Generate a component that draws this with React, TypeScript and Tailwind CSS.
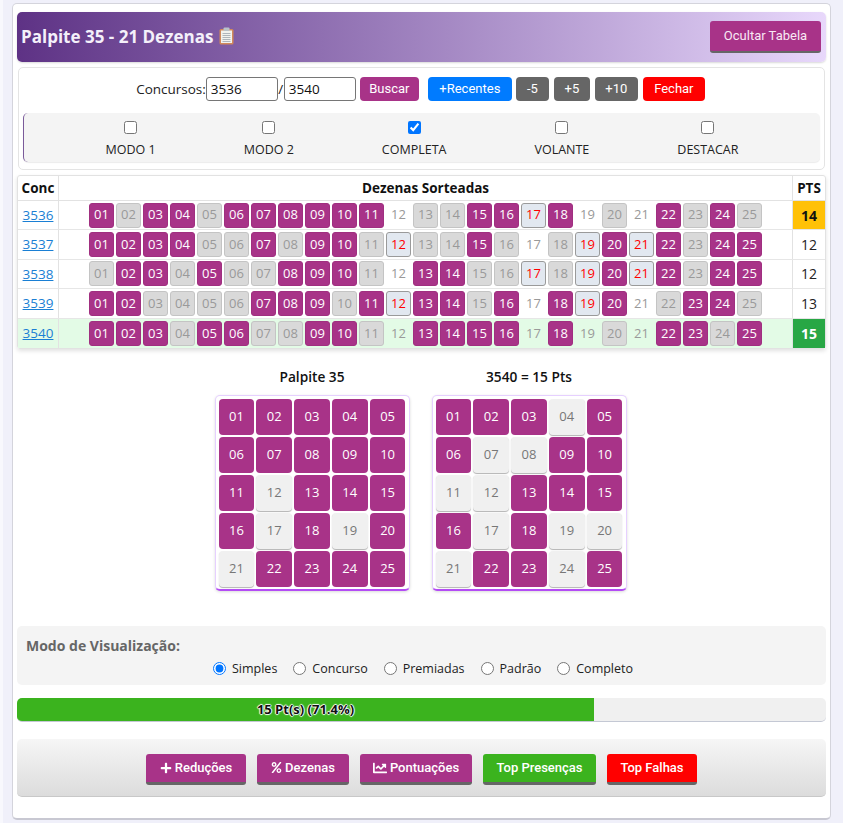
import { FaPlus, FaPercent, FaChartLine } from "react-icons/fa";

const sans = "font-['Open_Sans','Noto_Sans',sans-serif]";
const roboto = "font-['Roboto',sans-serif]";

const rows = [
  {
    conc: "3536",
    hit: [1, 3, 4, 6, 7, 8, 9, 10, 11, 15, 16, 18, 22, 24],
    red: [17],
    blank: [12, 19, 21],
    pts: 14,
  },
  {
    conc: "3537",
    hit: [1, 2, 3, 4, 7, 9, 10, 15, 20, 22, 24, 25],
    red: [12, 19, 21],
    blank: [17],
    pts: 12,
  },
  {
    conc: "3538",
    hit: [2, 3, 5, 8, 9, 10, 13, 14, 20, 22, 24, 25],
    red: [17, 19, 21],
    blank: [12],
    pts: 12,
  },
  {
    conc: "3539",
    hit: [1, 2, 7, 8, 9, 11, 13, 14, 16, 18, 20, 23, 24],
    red: [12, 19],
    blank: [17, 21],
    pts: 13,
  },
  {
    conc: "3540",
    hit: [1, 2, 3, 5, 6, 9, 10, 13, 14, 15, 16, 18, 22, 23, 25],
    red: [],
    blank: [12, 17, 19, 21],
    pts: 15,
  },
];

const numbers = Array.from({ length: 25 }, (_, i) => i + 1);
const pad = (n: number) => String(n).padStart(2, "0");

const palpite = numbers.filter((n) => ![12, 17, 19, 21].includes(n));
const sorteio = rows[4].hit;

function Ball({ n, row, last }: { n: number; row: (typeof rows)[number]; last: boolean }) {
  let cls = "bg-[#d9d9d9] text-[#999] border border-[#c4c4c4]";
  if (row.hit.includes(n)) cls = "bg-[#a83388] text-white border border-[#a02f80] font-medium";
  else if (row.red.includes(n)) cls = "bg-[#e2e8f0] text-[#ff0000] border border-[#9a9a9a]";
  else if (row.blank.includes(n)) cls = last ? "text-[#9a9a9a] bg-[#e3fbe6]" : "bg-white text-[#999]";
  return (
    <div className={`w-[25px] h-[25px] mx-px rounded-[3px] flex items-center justify-center text-[13px] ${cls}`}>
      {pad(n)}
    </div>
  );
}

function Board({ title, on }: { title: string; on: number[] }) {
  return (
    <div className="w-[195px]">
      <div className="text-center text-[13.7px] font-semibold text-[#111] h-[28px] leading-[20px]">{title}</div>
      <div className="bg-white rounded-[5px] border border-[#e6d0ff] border-b-2 border-b-[#b44cf5] px-[3px] pt-[3px] pb-[2px] grid grid-cols-5 gap-[2px] shadow-[0_1px_3px_rgba(0,0,0,0.15)]">
        {numbers.map((n) => (
          <div
            key={n}
            className={`h-[36px] rounded-[4px] flex items-center justify-center text-[13px] ${
              on.includes(n)
                ? "bg-[#a83388] text-white"
                : "bg-[#f0f0f0] text-[#777] shadow-[0_1px_1px_rgba(0,0,0,0.3)]"
            }`}
          >
            {pad(n)}
          </div>
        ))}
      </div>
    </div>
  );
}

function ClipboardIcon() {
  return (
    <svg width="15" height="18" viewBox="0 0 15 18" className="inline-block ml-[6px] -mt-[2px]">
      <rect x="0.5" y="2" width="14" height="15.5" rx="1.5" fill="#d2895a" />
      <rect x="2" y="3.5" width="11" height="12.5" fill="#f2f2ee" />
      <rect x="4.5" y="0.5" width="6" height="3.5" rx="1" fill="#b9c2c9" />
      <path d="M3.5 6.5h8M3.5 8.5h8M3.5 10.5h8M3.5 12.5h8M3.5 14.5h8" stroke="#a8aeb4" strokeWidth="0.9" />
    </svg>
  );
}

const smallBtn = `${roboto} h-[24px] rounded-[4px] text-white text-[13px] flex items-center justify-center`;
const bottomBtn = `${roboto} h-[31px] rounded-[3px] border-b-[3px] border-b-[#666] text-white text-[13px] font-medium flex items-center justify-center gap-[3px]`;

export default function App() {
  return (
    <div className={`${sans} min-h-[823px] bg-[#f0f0fa] border-l-[3px] border-l-[#f8f8fd] pt-[3px] pl-[9px] pr-[12px] pb-[3px]`}>
      <div className="h-[817px] bg-white border border-[#d4d4dc] border-b-2 border-b-[#c8c8d2] rounded-[5px] px-[4px] pt-[8px]">
        {/* Header */}
        <div className="h-[50px] rounded-[5px] bg-gradient-to-r from-[#5e3285] to-[#e8d8fb] flex items-center justify-between pl-[4px] pr-[5px] shadow-[0_1px_2px_rgba(0,0,0,0.15)]">
          <h1 className="text-[17px] font-bold text-[#f4f0fa] flex items-center">
            Palpite 35 - 21 Dezenas
            <ClipboardIcon />
          </h1>
          <button className={`${roboto} w-[111px] h-[32px] rounded-[3px] bg-[#a83388] border-b-[2px] border-b-[#666] text-[#f8e8f4] text-[13px]`}>
            Ocultar Tabela
          </button>
        </div>

        {/* Filtros */}
        <div className="mt-[5px] mx-px h-[103px] rounded-[5px] border border-[#e4e4e4] px-[4px] pt-[9px]">
          <div className="h-[24px] pr-[2px] flex items-center justify-center text-[13.5px] text-[#222]">
            <span>Concursos:</span>
            <input
              readOnly
              value="3536"
              className="w-[72px] h-[24px] px-[4px] border border-[#767676] rounded-[3px] text-[#111] text-[13.5px]"
            />
            <span className="w-[6px] text-center">/</span>
            <input
              readOnly
              value="3540"
              className="w-[72px] h-[24px] px-[4px] border border-[#767676] rounded-[3px] text-[#111] text-[13.5px]"
            />
            <button className={`${smallBtn} w-[59px] ml-[4px] bg-[#a83388]`}>Buscar</button>
            <button className={`${smallBtn} w-[84px] ml-[9px] bg-[#007bff]`}>+Recentes</button>
            <button className={`${smallBtn} w-[33px] ml-[4px] bg-[#666]`}>-5</button>
            <button className={`${smallBtn} w-[36px] ml-[5px] bg-[#666]`}>+5</button>
            <button className={`${smallBtn} w-[43px] ml-[5px] bg-[#666]`}>+10</button>
            <button className={`${smallBtn} w-[62px] ml-[5px] bg-[#ff0000]`}>Fechar</button>
          </div>
          <div className="mt-[12px] h-[49px] bg-[#f4f4f4] rounded-[5px] border-l border-l-[#7a5a9a] shadow-[0_1px_1px_rgba(0,0,0,0.08)] flex justify-center gap-[88px] text-[12.5px] text-[#222]">
            {["MODO 1", "MODO 2", "COMPLETA", "VOLANTE", "DESTACAR"].map((label) => (
              <label key={label} className="flex flex-col items-center pt-[8px]">
                <input type="checkbox" readOnly checked={label === "COMPLETA"} className="m-0 w-[13px] h-[13px]" />
                <span className="mt-[8px] leading-[16px]">{label}</span>
              </label>
            ))}
          </div>
        </div>

        {/* Tabela */}
        <div className="mt-[5px] border border-[#e2e2e2] rounded-[3px] shadow-[0_2px_4px_rgba(0,0,0,0.12)]">
          <div className="flex h-[25px] text-[13.5px] font-bold text-[#111] border-b border-[#e2e2e2]">
            <div className="w-[41px] flex items-center justify-center border-r border-[#e2e2e2]">Conc</div>
            <div className="flex-1 flex items-center justify-center border-r border-[#e2e2e2]">Dezenas Sorteadas</div>
            <div className="w-[32px] flex items-center justify-center">PTS</div>
          </div>
          {rows.map((row, i) => {
            const last = i === rows.length - 1;
            return (
              <div
                key={row.conc}
                className={`flex h-[29.4px] ${last ? "bg-[#e3fbe6]" : "border-b border-[#e6e6e6]"}`}
              >
                <div className="w-[41px] flex items-center justify-center border-r border-[#e2e2e2] text-[13.5px] text-[#1a7fd4] underline">
                  {row.conc}
                </div>
                <div className="flex-1 flex items-center justify-center border-r border-[#e2e2e2]">
                  {numbers.map((n) => (
                    <Ball key={n} n={n} row={row} last={last} />
                  ))}
                </div>
                <div
                  className={`w-[32px] flex items-center justify-center text-[14px] ${
                    row.pts === 14
                      ? "bg-[#ffc107] font-bold text-[#111]"
                      : row.pts === 15
                        ? "bg-[#28a745] font-bold text-white"
                        : "text-[#222]"
                  }`}
                >
                  {row.pts}
                </div>
              </div>
            );
          })}
        </div>

        {/* Volantes */}
        <div className="mt-[18px] pr-[2px] flex justify-center gap-[22px]">
          <Board title="Palpite 35" on={palpite} />
          <Board title="3540 = 15 Pts" on={sorteio} />
        </div>

        {/* Modo */}
        <div className="mt-[35px] h-[59px] bg-[#f4f4f4] rounded-[5px] px-[9px] pt-[10px]">
          <div className="text-[14px] font-bold text-[#666] leading-[20px]">Modo de Visualização:</div>
          <div className="mt-[3px] pl-[3px] flex justify-center gap-[16px] text-[12.5px] text-[#222]">
            {["Simples", "Concurso", "Premiadas", "Padrão", "Completo"].map((label) => (
              <label key={label} className="flex items-center gap-[6px] h-[20px]">
                <input type="radio" readOnly checked={label === "Simples"} className="m-0 w-[13px] h-[13px]" />
                {label}
              </label>
            ))}
          </div>
        </div>

        {/* Progresso */}
        <div className="mt-[13px] h-[24px] bg-[#f0f0f0] rounded-[5px] border-b border-b-[#c4c8d4] overflow-hidden">
          <div className="h-[23px] w-[577px] bg-[#3bb31e] flex items-center justify-center text-[13px] font-bold text-[#111] [text-shadow:1px_0_1px_#fff,-1px_0_1px_#fff,0_1px_1px_#fff,0_-1px_1px_#fff]">
            15 Pt(s) (71.4%)
          </div>
        </div>

        {/* Acoes */}
        <div className="mt-[17px] h-[58px] rounded-[5px] bg-gradient-to-b from-[#f6f6f6] to-[#dcdcdc] border-b border-b-[#c8c8c8] flex justify-center items-start gap-[11px] pt-[15px]">
          <button className={`${bottomBtn} w-[100px] bg-[#a83388]`}>
            <FaPlus className="text-[12px]" /> Reduções
          </button>
          <button className={`${bottomBtn} w-[92px] bg-[#a83388]`}>
            <FaPercent className="text-[11px]" /> Dezenas
          </button>
          <button className={`${bottomBtn} w-[112px] bg-[#a83388]`}>
            <FaChartLine className="text-[14px]" /> Pontuações
          </button>
          <button className={`${bottomBtn} w-[113px] bg-[#3bb31e]`}>Top Presenças</button>
          <button className={`${bottomBtn} w-[90px] bg-[#ff0000]`}>Top Falhas</button>
        </div>
      </div>
    </div>
  );
}
